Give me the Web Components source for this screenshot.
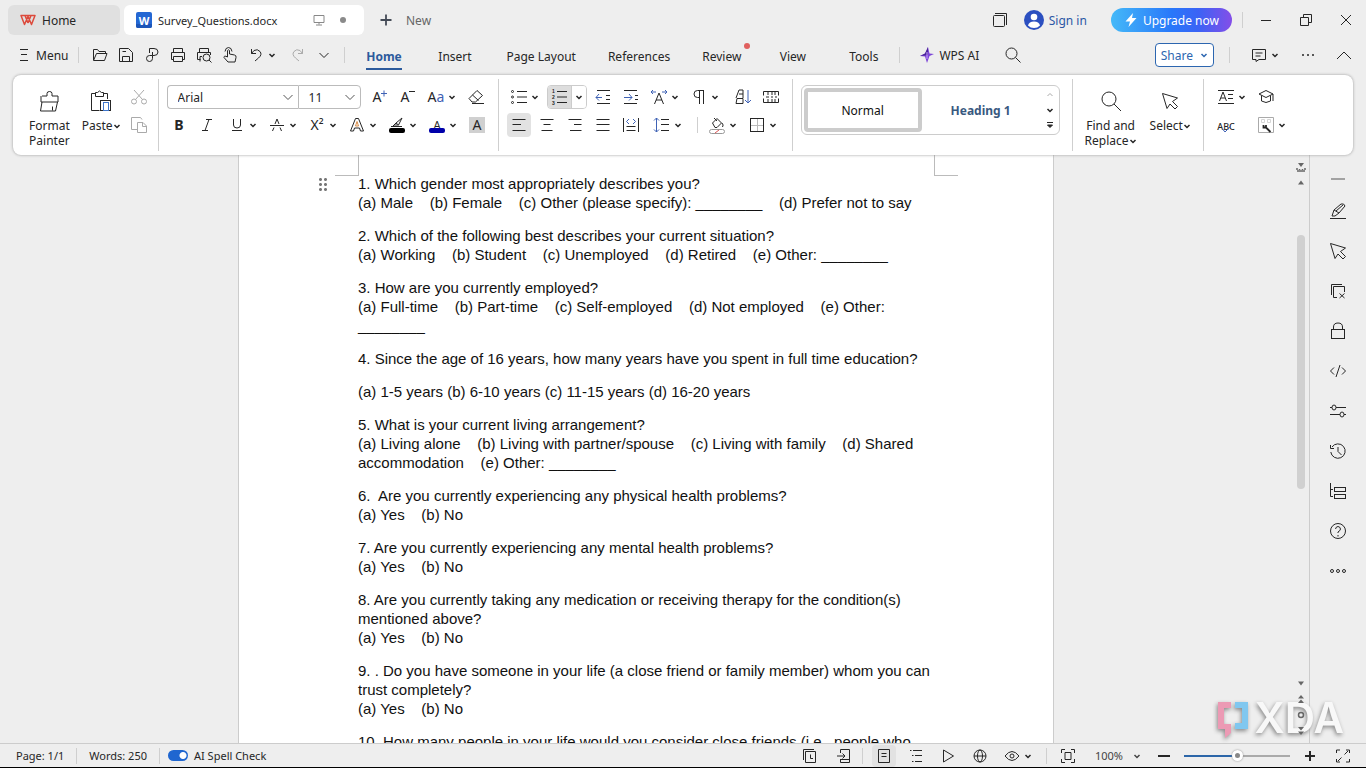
<!DOCTYPE html>
<html lang="en">
<head>
<meta charset="utf-8">
<meta name="viewport" content="width=device-width, initial-scale=1">
<title>Survey_Questions.docx</title>
<style>
  body {
    margin: 0;
    font-family: "Noto Sans", "Open Sans", sans-serif;
    font-size: 12px;
    color: #262626;
    background: #eee;
  }
</style>
</head>
<body>
<wps-app></wps-app>

<script>
// Icons, all drawn on a grid centred on 0,0
const caret = '<path d="M-2.5 -1L0 1.5L2.5 -1" stroke-width="1.5"/>';
const T = (text, attrs = "") =>
  `<text text-anchor="middle" fill="currentColor" stroke="none" font-size="14" y="5" ${attrs}>${text}</text>`;

const ICONS = {
  caret,
  chevron: '<path d="M-4.5 -2L0 2.5L4.5 -2"/>',
  up: '<path d="M-7 4L0 -3L7 4"/>',
  logo: '<path d="M-7 -4.5H7L3.500 4.500L0 -3.500L-3.500 4.500ZM-3 -4.500L0 3M3 -4.500L0 3" stroke="#dc4a3c" stroke-width="1.5" stroke-linejoin="round"/>',
  word: '<rect x="-8" y="-8" width="16" height="16" rx="2" fill="#2467d3" stroke="none"/><path d="M-8 4H8V6Q8 8 6 8H-6Q-8 8 -8 6Z" fill="#1c55b8" stroke="none"/>' + T("W", 'style="fill:#fff;font-weight:700;font-size:11px" y="3"'),
  monitor: '<path d="M-5 -4.5H5V2.5H-5ZM0 2.5V4.5M-3 5H3" stroke="#888"/>',
  dot: '<circle r="3" fill="#8a8a8a" stroke="none"/>',
  plus: '<path d="M-5.5 0H5.5M0 -5.5V5.5" stroke="#444b57" stroke-width="1.8"/>',
  windows: '<rect x="-6.500" y="-4.500" width="11" height="11" rx="1"/><path d="M-5 -6.5H6.5V5"/>',
  user: '<circle r="10" fill="#2b4fc0" stroke="none"/><circle cy="-3" r="3.3" fill="#fff" stroke="none"/><path d="M-6 5.5Q-5 1.5 0 1.5T6 5.5Q3.500 8 0 8T-6 5.500Z" fill="#fff" stroke="none"/>',
  bolt: '<path d="M2 -7L-5.500 1.500H-1L-2.500 7L5.500 -2H1Z" fill="#fff" stroke="none"/>',
  minimize: '<path d="M-5 .5H5"/>',
  restore: '<path d="M-5.500 -2.500H2.500V5.500H-5.500ZM-2.500 -2.500V-5.500H5.500V2.500H2.500"/>',
  close: '<path d="M-5 -5L5 5M5 -5L-5 5"/>',
  menu: '<path d="M-4 -5.500H4M-3 -.5H3M-4 5.500H4"/>',
  open: '<path d="M-6.500 5V-5.500H-2.500L-1 -3.500H5.500V-1.500M-6.500 5.500L-3.500 -1.500H7L4.500 5.500Z"/>',
  save: '<path d="M-6.500 -6.500H2.500L6.500 -2.500V6.500H-6.500ZM-3.500 6V1.500H3.500V6M-3.500 -3.500H0"/>',
  pdf: '<path d="M-2.500 -2V-6.500H2Q6 -6.500 6 -3T2 .5H.5V3.500Q.5 6.500 -2.500 6.500T-5.500 3.500T-2.500 .5H.5V-3"/>',
  print: '<path d="M-4.500 -2.500V-6.500H4.500V-2.500M-4.500 4.500H-6.500V-2.500H6.500V4.500H4.500M-4.500 1.500H4.500V6.500H-4.500Z"/>',
  preview: '<path d="M-4.500 -2.500V-6.500H4.500V-2.500M-3.500 4.500H-6.500V-2.500H6.500V0M-4 6.500V1.500H-2"/><circle cx="2.500" cy="2.500" r="3.500"/><path d="M5 5L7.500 7.500"/>',
  touch: '<path d="M-2.500 2V-4.500Q-1.500 -6 -.5 -4.500V-1L4.500 0Q6.500 .5 6 2.500L5 7H-2L-6 2.500Q-6 0 -2.500 2M-5 -3.500Q-4.500 -7.500 -1.500 -7.500T2 -3.500"/>',
  undo: '<path d="M-4.500 -6V-1.500H0M-4.500 -1.500L-2 -4.500Q1.500 -6.500 4 -3.500T2.500 3L-1 6"/>',
  redo: '<path d="M4.500 -6V-1.500H0M4.500 -1.500L2 -4.500Q-1.500 -6.500 -4 -3.500T-2.500 3L1 6" stroke="#aaa"/>',
  star: '<path d="M1 -8L2.500 -1.500L7 -1L2.500 1L0 8L-2 1.500L-7 1L-2 -1.500Z" fill="#7d45d8" stroke="none"/><path d="M-7 1L-2 -1.500L1 -8L1 0Z" fill="#4a2597" stroke="none"/><path d="M0 -3V4" stroke="#c9a3ff"/>',
  search: '<circle cx="-1.500" cy="-1.500" r="5.500"/><path d="M2.500 2.500L7.500 7.500"/>',
  comment: '<path d="M-6.500 -5.500H6.500V4.500H0L-3 6.500V4.500H-6.500ZM-3.500 -2H3.500M-3.500 1H1.500"/>',
  dots: '<path d="M-6 0H-4M-1 0H1M4 0H6" stroke-width="1.500"/>',
  painter: '<path d="M-7.500 -5.500H-2.500V-8Q-2.500 -10 0 -10T2.500 -8V-5.500H8.500V.5H-8.500V-5.500M-7.500 .5L-9 9.500H6L8 .5M3 5V9" transform="translate(.5 .5)"/>',
  paste: '<path d="M-1.500 9.500H-9.500V-7.500H-6M3 -7.500H6.500V-2M-5.500 -4.500V-8.500H-3.500Q-1.500 -11.500 .5 -8.500H2.500V-4.500Z"/><rect x="-.5" y="-.5" width="10" height="10"/><rect x="2.500" y="1.500" width="5" height="8" stroke="#3f75c9"/>',
  cut: '<g stroke="#aaa"><circle cx="-5" cy="4.500" r="2.500"/><circle cx="5" cy="4.500" r="2.500"/><path d="M-3.500 2.500L5 -7M3.500 2.500L-5 -7"/></g>',
  copy: '<path d="M-2 4.500H-7.500V-7.500H1.500L3 -5.500M-1.500 -2.500H4L7.500 1V7.500H-1.500ZM3.500 -2.500V1.500H7.500" stroke="#aaa"/>',
  grow: T("A", 'x="-2"') + '<path d="M2 -3.500H8M5 -6.500V-.5" stroke="#3f62b5"/>',
  shrink: T("A", 'x="-2"') + '<path d="M2 -5.500H8"/>',
  case: T('A<tspan fill="#3f62b5">a</tspan>'),
  eraser: '<path d="M-7 1.500L1 -6.500L6.500 -1.500L-.5 5H-4ZM-3.500 -2L2.500 3.500M-4 6.500H8"/>',
  bold: T("B", 'font-weight="700"'),
  italic: '<path d="M-1 -5.500H5M-5 5.500H1M2 -5.500L-2 5.500"/>',
  underline: '<path d="M-3.500 -6V0Q-3.500 3 0 3T3.500 0V-6M-5 5.500H5"/>',
  strike: '<path d="M-7 .5H7M-2 -1L0 -6L2 -1M-3 2.500L-4.500 6M3 2.500L4.500 6"/>',
  sup: T('X²'),
  outline: '<path d="M-6.500 6L-1.500 -6.500H1.500L6.500 6H3.500L2.500 3H-2.500L-3.500 6Z"/><path d="M-1.500 1L0 -3.500L1.500 1Z" stroke="#d88b45"/>',
  marker: '<path d="M-4 1L-1 -2L5 -7L1.500 0H-3M-1 -2L1.500 0M-6 1.500H5"/><rect x="-8" y="3" width="16" height="5" rx="2" fill="#000" stroke="none"/>',
  color: T("A", 'y="1" style="font-size:12px"') + '<rect x="-8" y="3" width="16" height="5" rx="2" fill="#00a" stroke="none"/>',
  shade: '<rect x="-8" y="-8" width="16" height="16" fill="#d0d0d0" stroke="none"/>' + T("A"),
  bullets: '<path d="M-2 -5.500H8M-2 0H8M-2 5.500H8"/><circle cx="-6.500" cy="-5.500" r="1"/><circle cx="-6.500" r="1"/><circle cx="-6.500" cy="5.500" r="1"/>',
  numbers: '<path d="M-2 -5.500H8M-2 0H8M-2 5.500H8"/><g style="font:700 5px \'Liberation Sans\',sans-serif">' + ["1", "2", "3"].map((n, i) => `<text x="-7" y="${-4 + i * 6}" fill="currentColor" stroke="none">${n}</text>`).join("") + "</g>",
  outdent: '<path d="M-6 -6.500H7M3 -1.500H7M3 2.500H7M-6 6.500H7"/><path d="M-1 .5H-7M-4 -3L-7 .5L-4 3.500" stroke="#3f62b5"/>',
  indent: '<path d="M-7 -6.500H6M4 -1.500H7M4 2.500H7M-7 6.500H6"/><path d="M-7 .5H1M-2 -3L1 .5L-2 3.500" stroke="#3f62b5"/>',
  scale: '<path d="M-4.500 7L0 -4L4.500 7M-3 3H3"/><path d="M-8 -5H-3M-6 -7L-8 -5L-6 -3M8 -5H3M6 -7L8 -5L6 -3" stroke="#3f62b5"/>',
  pilcrow: '<path d="M5 -6.500H-1.500Q-5 -6.500 -5 -3T-1.500 .5H0M.5 -6.500V7M4.500 -6.500V7"/>',
  sort: '<path d="M-7 1L-4 -7H0V1M-7 6.500L-6 1.500H0V6.500ZM-4 -3H0"/><path d="M5 -7V6M2 3L5 6L8 3" stroke="#3f62b5"/>',
  tabs: '<path d="M-7.500 -1.500V-5.500H7.500V-1.500M-7.500 1.500V5.500H7.500V1.500M-3 -5V-2M1 -5V-2M4 -5V-2M-3 5V2M1 5V2M4 5V2M-5 0H-2M0 0H2M4 0H6"/>',
  left: '<path d="M-6.500 -5.500H6.500M-6.500 -.5H2M-6.500 5.500H6.500"/>',
  center: '<path d="M-6.500 -5.500H6.500M-3.500 -.5H3.500M-5.500 5.500H5.500"/>',
  right: '<path d="M-6.500 -5.500H6.500M-1 -.5H6.500M-5 5.500H6.500"/>',
  justify: '<path d="M-6.500 -5.500H6.500M-6.500 -.5H6.500M-6.500 5.500H6.500"/>',
  distribute: '<path d="M-7.500 -7V7M7.500 -7V7M-4.500 1.500H4.500M-4.500 5.500H4.500"/><path d="M-2 -6L-4.500 -3.500L-2 -1M2 -6L4.500 -3.500L2 -1" stroke="#3f62b5"/>',
  spacing: '<path d="M-1 -5.500H7M-1 -.5H7M-1 5.500H7"/><path d="M-5.500 -7V7M-8 -4.500L-5.500 -7L-3 -4.500M-8 4.500L-5.500 7L-3 4.500" stroke="#3f62b5"/>',
  fill: '<path d="M-4.500 -2L0 -6.500L4.500 -2L0 2.500H-2ZM-3 -7L0 -4M5 -2Q7 0 5.500 2"/><rect x="-7.500" y="4.500" width="15" height="4" rx="2" stroke="#999"/><path d="M-2 8L2 5" stroke="#d55"/>',
  border: '<path d="M.5 -6V6M-6 .5H6" stroke="#bbb"/><rect x="-6.500" y="-6.500" width="13" height="13"/>',
  tridown: '<path d="M-3 -1.500H3L0 2.500Z" fill="currentColor" stroke="none"/>',
  triup: '<path d="M-3 1.500H3L0 -2.500Z" fill="currentColor" stroke="none"/>',
  caretup: '<path d="M-2.500 1L0 -1.500L2.500 1" stroke="#aaa"/>',
  more: '<path d="M-3 -2.500H3"/><path d="M-2.500 0L0 2.500L2.500 0Z" fill="currentColor"/>',
  find: '<circle cx="-2" cy="-2" r="7"/><path d="M3 3L10 10"/>',
  cursor: '<path d="M-7.500 -7.500L7.500 -3L2.500 .5L7.500 5.500L5 8L0 3L-3 7.500Z"/>',
  layout: '<path d="M-8 -6.500H8M-8 6.500H8M2 -2.500H7M2 1.500H7M-6.500 4L-3 -5L.5 4M-5 1H-1"/>',
  cap: '<path d="M-7 -3L0 -6.500L7 -3L0 .5ZM-4.500 -1.500V4Q0 7 4.500 4V-1.500M7 -3V4"/>',
  abc: T("ABC", 'y="1" style="font-size:9px;font-weight:500"') + '<path d="M-3.500 4L-1 7L5 1" stroke="#3f62b5"/>',
  wrench: '<path d="M-7.500 -7.500H7.500V7.500H-7.500Z" stroke="#aaa"/><path d="M-4.500 -5.500H-1.500V-2.500H-4.500ZM1.500 -5.500H4.500V-2.500H1.500Z" stroke="#d5d5d5"/><path d="M-2.500 0V2.500H0V0M0 2.500L4.500 7" stroke-width="1.800"/>',
  dash: '<path d="M-7 0H7" stroke="#888" stroke-width="1.500"/>',
  pen: '<path d="M-6 5L-4 -1L3 -7Q6 -8 7 -5L1 2L-3 5ZM-4 -1L1 2M-2 0L5 -6M-8 7.500H8"/>',
  layers: '<path d="M-6.500 4V-6.500H4M-1 6.500H-4.500V-4.500H6.500V1M1.500 2.500L6.500 7M6.500 2.500L1.500 7"/>',
  lock: '<rect x="-6.500" y="-1.500" width="13" height="9"/><path d="M-4.500 -1.500V-4Q-4.500 -8 0 -8T4.500 -4V-1.500"/>',
  code: '<path d="M-4 -3.500L-7.500 0L-4 3.500M4 -3.500L7.500 0L4 3.500M2 -6L-2 6"/>',
  sliders: '<path d="M-8 -3.500H-6M-2 -3.500H8M-8 3.500H2M6 3.500H8"/><ellipse cx="-4" cy="-3.500" rx="2" ry="2.500"/><ellipse cx="4" cy="3.500" rx="2" ry="2.500"/>',
  history: '<path d="M-6 -4A7.200 7.200 0 1 1 -7.200 1M-7.500 -6V-2.500H-4M0 -4V.5L3.500 4"/>',
  tree: '<path d="M-7.500 -8V5.500H-5M-7.500 -1.500H-5"/><rect x="-3.500" y="-3.500" width="11" height="4"/><rect x="-3.500" y="3.500" width="11" height="4"/>',
  help: '<circle r="7.500"/><path d="M-2.500 -2Q-2 -4.500 0 -4.500T2.500 -2Q2.500 -.5 0 1V2M0 4V5.500"/>',
  rings: '<circle cx="-6" r="1.500"/><circle r="1.500"/><circle cx="6" r="1.500"/>',
  recent: '<path d="M-4.500 -4.500H5.500V6.500H-4.500ZM-6.500 4V-6.500H4M.5 -1.500V2.500H3"/>',
  export: '<path d="M-3.500 -3V-6.500H5.500V6.500H-3.500V3M-7 0H1M-1.500 -2.500L1 0L-1.500 2.500M-3 3.500H5"/>',
  pageview: '<path d="M-5.500 -6.500H5.500V6.500H-5.500ZM-2.500 -2.500H2.500M-2.500 .5H2.500"/>',
  outlineview: '<path d="M-6 -5.500H-4.500M-3 -5.500H6M-4 -.5H-2.500M-1 -.5H6M-4 5.500H-2.500M-1 5.500H6"/>',
  play: '<path d="M-4.500 -6L5.500 0L-4.500 6Z"/>',
  globe: '<circle r="6"/><ellipse rx="2.500" ry="6"/><path d="M-6 0H6"/>',
  eye: '<path d="M-7 0Q0 -9 7 0Q0 9 -7 0Z"/><circle r="2"/>',
  fit: '<path d="M-6.500 -3V-6.500H-3M3 -6.500H6.500V-3M6.500 3V6.500H3M-3 6.500H-6.500V3M-3 -3.500H3V3.500H-3Z"/>',
  minus: '<path d="M-6 0H6" stroke-width="2"/>',
  add: '<path d="M-5 0H5M0 -5V5" stroke-width="2"/>',
  expand: '<path d="M-6.500 -3V-6H-3M3 -6H6.500V-3M6.500 3V6H3M-3 6H-6.500V3M1.500 -1.500L5 -5M-1.500 1.500L-5 5"/>',
  select: '<path d="M-3 -4H3L0 0Z" fill="currentColor" stroke="none"/><path d="M-4 1V3M-1.500 2V3M1.500 2V3M4 1V3M-4 4H4" stroke-width="1.500"/>',
  prev: '<path d="M-3 -.5H3L0 -4ZM-3 4H3L0 .5Z" fill="currentColor" stroke="none"/>',
  next: '<path d="M-3 -4H3L0 -.5ZM-3 .5H3L0 4Z" fill="currentColor" stroke="none"/>',
  ring: '<circle r="2.500" stroke-width="1.500"/>',
};

class UiIcon extends HTMLElement {
  connectedCallback() {
    const size = this.getAttribute("size") || 18;
    this.attachShadow({ mode: "open" });
    this.shadowRoot.innerHTML = `
      <style>
        :host { display: inline-flex; flex: none; }
        svg { display: block; overflow: visible; font-family: "Noto Sans", sans-serif; }
      </style>
      <svg width="${size}" height="${size}" viewBox="${-size / 2} ${-size / 2} ${size} ${size}"
        fill="none" stroke="currentColor" aria-hidden="true">${ICONS[this.getAttribute("name")]}</svg>`;
  }
}

// Small square button, with an optional drop-down caret
class ToolButton extends HTMLElement {
  connectedCallback() {
    const menu = this.hasAttribute("menu");
    this.attachShadow({ mode: "open" });
    this.shadowRoot.innerHTML = `
      <style>
        :host { display: inline-flex; flex: none; width: var(--tool, 24px); height: 24px; }
        :host([menu]) { width: 40px; }
        button {
          flex: 1; min-width: 0; display: flex; align-items: center; justify-content: center;
          border: 0; padding: 0; background: none; color: inherit; font: inherit; border-radius: 4px;
        }
        button.menu { justify-content: flex-start; }
        .icon { display: flex; flex: none; width: 24px; justify-content: center; }
        .caret { display: flex; flex: none; align-items: center; justify-content: center; }
        :host([active]) button { background: #e2e2e2; }
        :host([split]) { width: 40px; box-sizing: border-box; border: 1px solid #ccc; border-radius: 4px; }
        :host([split]) button { background: #ddd; border-radius: 3px; overflow: hidden; }
        :host([split]) .icon { width: 23px; }
        :host([split]) .caret { background: #fff; width: 14px; align-self: stretch; border-left: 1px solid #ccc; }
      </style>
      <button class="${menu ? "menu" : ""}" aria-label="${this.getAttribute("label") || this.getAttribute("icon")}">
        <span class="icon"><ui-icon name="${this.getAttribute("icon")}"></ui-icon></span>
        ${menu ? '<span class="caret"><ui-icon name="caret" size="8"></ui-icon></span>' : ""}
      </button>`;
  }
}

// Large ribbon button: icon above a label
class BigButton extends HTMLElement {
  connectedCallback() {
    this.attachShadow({ mode: "open" });
    this.shadowRoot.innerHTML = `
      <style>
        :host { display: block; }
        button {
          display: flex; flex-direction: column; align-items: center; gap: 5px;
          border: 0; padding: 0; background: none; color: inherit; font: inherit; line-height: 15px;
          white-space: nowrap;
        }
      </style>
      <button><ui-icon name="${this.getAttribute("icon")}" size="24"></ui-icon><span><slot></slot></span></button>`;
  }
}

class VRule extends HTMLElement {
  connectedCallback() {
    this.attachShadow({ mode: "open" });
    this.shadowRoot.innerHTML = `
      <style>:host { display: block; flex: none; width: 1px; height: 16px; background: #cfcfcf; }</style>`;
  }
}

class TitleBar extends HTMLElement {
  connectedCallback() {
    this.attachShadow({ mode: "open" });
    this.shadowRoot.innerHTML = `
      <style>
        :host { display: flex; align-items: center; height: 40px; padding-left: 8px; }
        button { border: 0; background: none; font: inherit; color: inherit; display: flex; align-items: center; padding: 0; }
        .tab { height: 30px; border-radius: 6px; background: #e0e0e0; padding: 0 12px; gap: 6px; box-sizing: border-box; }
        .home { width: 112px; }
        .doc { width: 240px; margin-left: 4px; background: #fff; }
        .doc span { flex: 1; text-align: left; font-size: 11px; }
        .new { gap: 11px; margin-left: 13px; color: #666; }
        .spacer { flex: 1; }
        .signin { gap: 5px; margin: 0 24px 0 12px; color: #2b57a5; text-decoration: none; display: flex; align-items: center; }
        .upgrade {
          height: 24px; border-radius: 12px; padding: 0 13px 0 11px; gap: 3px; color: #fff;
          background: linear-gradient(90deg, #45b9f8, #2878fa 50%, #3b63f5 72%, #844ee8);
        }
        v-rule { margin: 0 3px 0 10px; }
        .win { --tool: 40px; }
      </style>
      <button class="tab home"><ui-icon name="logo" size="16"></ui-icon>Home</button>
      <button class="tab doc"><ui-icon name="word" size="16"></ui-icon><span>Survey_Questions.docx</span>
        <ui-icon name="monitor"></ui-icon><ui-icon name="dot"></ui-icon></button>
      <button class="new"><ui-icon name="plus"></ui-icon>New</button>
      <div class="spacer"></div>
      <tool-button icon="windows" label="Windows"></tool-button>
      <a class="signin" href="#"><ui-icon name="user" size="20"></ui-icon>Sign in</a>
      <button class="upgrade"><ui-icon name="bolt"></ui-icon>Upgrade now</button>
      <v-rule></v-rule>
      <tool-button class="win" icon="minimize"></tool-button>
      <tool-button class="win" icon="restore"></tool-button>
      <tool-button class="win" icon="close"></tool-button>`;
  }
}

class MenuTab extends HTMLElement {
  connectedCallback() {
    this.attachShadow({ mode: "open" });
    this.shadowRoot.innerHTML = `
      <style>
        :host { display: flex; flex: none; min-width: 71px; justify-content: center; box-sizing: border-box; padding: 0 16px; }
        button { position: relative; border: 0; background: none; padding: 0; font: inherit; color: inherit; height: 24px; }
        :host([selected]) button { color: #2c5a9c; font-weight: 700; box-shadow: 0 2px #2c5a9c; }
        :host([badge]) button::after {
          content: ""; position: absolute; top: -1px; right: -9px;
          width: 6px; height: 6px; border-radius: 50%; background: #e0605e;
        }
      </style>
      <button><slot></slot></button>`;
  }
}

class MenuBar extends HTMLElement {
  connectedCallback() {
    this.attachShadow({ mode: "open" });
    this.shadowRoot.innerHTML = `
      <style>
        :host { display: flex; align-items: center; height: 30px; padding: 0 4px 5px 15px; }
        button { border: 0; background: none; padding: 0; font: inherit; color: inherit; display: flex; align-items: center; }
        .menu { gap: 3px; margin-right: 10px; }
        .quick { display: flex; --tool: 26px; margin: 0 7px 0 8px; }
        .quick [menu] { margin: 0 1px; }
        .tabs { display: flex; margin: 2px 0 0 3px; }
        .ai { gap: 3px; margin: 0 22px 0 18px; }
        .spacer { flex: 1; }
        .share {
          height: 24px; border: 1px solid #2c66b0; border-radius: 4px; background: #fff;
          color: #2c66b0; padding: 0 5px; gap: 7px; margin-right: 15px;
        }
        .end { display: flex; --tool: 36px; margin-left: 17px; }
        .end [menu] { margin-right: 3px; }
      </style>
      <button class="menu"><ui-icon name="menu"></ui-icon>Menu</button>
      <v-rule></v-rule>
      <div class="quick">
        <tool-button icon="open"></tool-button>
        <tool-button icon="save"></tool-button>
        <tool-button icon="pdf"></tool-button>
        <tool-button icon="print"></tool-button>
        <tool-button icon="preview"></tool-button>
        <tool-button icon="touch"></tool-button>
        <tool-button icon="undo" menu></tool-button>
        <tool-button icon="redo"></tool-button>
        <tool-button icon="chevron" label="Customize"></tool-button>
      </div>
      <v-rule></v-rule>
      <div class="tabs">
        <menu-tab selected>Home</menu-tab>
        <menu-tab>Insert</menu-tab>
        <menu-tab>Page Layout</menu-tab>
        <menu-tab>References</menu-tab>
        <menu-tab badge>Review</menu-tab>
        <menu-tab>View</menu-tab>
        <menu-tab>Tools</menu-tab>
      </div>
      <v-rule></v-rule>
      <button class="ai"><ui-icon name="star"></ui-icon>WPS AI</button>
      <tool-button icon="search"></tool-button>
      <div class="spacer"></div>
      <button class="share">Share<ui-icon name="caret" size="8"></ui-icon></button>
      <v-rule></v-rule>
      <div class="end">
        <tool-button icon="comment" menu></tool-button>
        <tool-button icon="dots" label="More"></tool-button>
        <tool-button icon="up" label="Collapse ribbon"></tool-button>
      </div>`;
  }
}

// Drop-down box of the ribbon: <select> with the chevron laid over its end
class ComboBox extends HTMLElement {
  connectedCallback() {
    this.attachShadow({ mode: "open" });
    this.shadowRoot.innerHTML = `
      <style>
        :host { display: grid; align-items: center; height: 24px; border: 1px solid #bbb; box-sizing: border-box; background: #fff; }
        select, ui-icon { grid-area: 1 / 1; }
        select { appearance: none; border: 0; background: none; height: 22px; font: inherit; color: inherit; padding: 0 10px; }
        ui-icon { justify-self: end; margin-right: 3px; pointer-events: none; color: #555; }
      </style>
      <select aria-label="${this.getAttribute("label")}"><option>${this.textContent}</option></select>
      <ui-icon name="chevron" size="14"></ui-icon>`;
  }
}

class RibbonBar extends HTMLElement {
  connectedCallback() {
    this.attachShadow({ mode: "open" });
    this.shadowRoot.innerHTML = `
      <style>
        :host {
          display: flex; position: relative; z-index: 1; height: 80px; margin: 0 13px; box-sizing: border-box;
          background: #fff; border-radius: 8px; box-shadow: 0 0 3px #999; padding: 0 16px;
        }
        v-rule { height: 72px; margin-top: 4px; }
        v-rule.short { height: 16px; margin: 4px 7px 0 7px; }
        .group { display: flex; padding-top: 10px; }
        .rows { display: flex; flex-direction: column; gap: 4px; }
        .row { display: flex; }
        .gap { display: flex; gap: 4px; }
        .big { padding-top: 14px; }
        .font { margin: 0 9px 0 8px; }
        .font combo-box:nth-of-type(1) { width: 131px; border-radius: 4px 0 0 4px; border-right: 0; }
        .font combo-box:nth-of-type(2) { width: 63px; border-radius: 0 4px 4px 0; }
        .size { margin: 0 5px 0 6px; }
        .style { margin-right: 6px; }
        .para { margin: 0 7px 0 8px; }
        .para .style { margin-right: 7px; }
        .styles {
          display: flex; box-sizing: border-box; width: 259px; height: 50px; margin: 0 12px 0 8px; padding: 2px;
          border: 1px solid #ccc; border-radius: 6px;
        }
        .styles button { width: 118px; border: 4px solid transparent; background: none; font: inherit; color: #111; padding: 0; border-radius: 4px; }
        .styles .normal { border-color: #ccc; }
        .styles .heading { color: #39597f; font-weight: 700; }
        .arrows { flex: 1; display: flex; flex-direction: column; align-items: flex-end; justify-content: space-around; padding-right: 1px; }
      </style>

      <div class="group big" style="gap: 12px">
        <big-button icon="painter">Format<br>Painter</big-button>
        <big-button icon="paste">Paste<ui-icon name="caret" size="8"></ui-icon></big-button>
      </div>
      <div class="group" style="margin: 0 7px 0 6px">
        <div class="rows"><tool-button icon="cut"></tool-button><tool-button icon="copy"></tool-button></div>
      </div>
      <v-rule></v-rule>

      <div class="group font"><div class="rows">
        <div class="row">
          <combo-box label="Font">Arial</combo-box>
          <combo-box label="Font size">11</combo-box>
          <div class="gap size"><tool-button icon="grow"></tool-button><tool-button icon="shrink"></tool-button></div>
          <tool-button icon="case" menu></tool-button>
          <tool-button icon="eraser"></tool-button>
        </div>
        <div class="row">
          <div class="gap style"><tool-button icon="bold"></tool-button><tool-button icon="italic"></tool-button></div>
          <tool-button icon="underline" menu></tool-button>
          <tool-button icon="strike" menu></tool-button>
          <tool-button icon="sup" menu label="Superscript"></tool-button>
          <tool-button icon="outline" menu></tool-button>
          <tool-button icon="marker" menu></tool-button>
          <tool-button icon="color" menu></tool-button>
          <tool-button icon="shade"></tool-button>
        </div>
      </div></div>
      <v-rule></v-rule>

      <div class="group para"><div class="rows">
        <div class="row gap">
          <div class="row"><tool-button icon="bullets" menu></tool-button><tool-button icon="numbers" menu split></tool-button></div>
          <tool-button icon="outdent"></tool-button>
          <tool-button icon="indent"></tool-button>
          <div class="row"><tool-button icon="scale" menu></tool-button><tool-button icon="pilcrow" menu></tool-button></div>
          <tool-button icon="sort"></tool-button>
          <tool-button icon="tabs"></tool-button>
        </div>
        <div class="row">
          <div class="gap style">
            <tool-button icon="left" active></tool-button>
            <tool-button icon="center"></tool-button>
            <tool-button icon="right"></tool-button>
            <tool-button icon="justify"></tool-button>
            <tool-button icon="distribute"></tool-button>
          </div>
          <tool-button icon="spacing" menu></tool-button>
          <v-rule class="short"></v-rule>
          <tool-button icon="fill" menu></tool-button>
          <tool-button icon="border" menu></tool-button>
        </div>
      </div></div>
      <v-rule></v-rule>

      <div class="group">
        <div class="styles">
          <button class="normal">Normal</button>
          <button class="heading">Heading 1</button>
          <div class="arrows">
            <ui-icon name="caretup" size="12"></ui-icon>
            <ui-icon name="caret" size="12"></ui-icon>
            <ui-icon name="more" size="12"></ui-icon>
          </div>
        </div>
      </div>
      <v-rule></v-rule>

      <div class="group big" style="gap: 13px; margin: 0 12px">
        <big-button icon="find">Find and<br>Replace<ui-icon name="caret" size="8"></ui-icon></big-button>
        <big-button icon="cursor">Select<ui-icon name="caret" size="8"></ui-icon></big-button>
      </div>
      <v-rule></v-rule>

      <div class="group" style="margin-left: 10px">
        <div class="rows"><tool-button icon="layout" menu></tool-button><tool-button icon="abc"></tool-button></div>
        <div class="rows"><tool-button icon="cap"></tool-button><tool-button icon="wrench" menu></tool-button></div>
      </div>`;
  }
}

const SURVEY = [
  "1. Which gender most appropriately describes you?\n(a) Male    (b) Female    (c) Other (please specify): ________    (d) Prefer not to say",
  "2. Which of the following best describes your current situation?\n(a) Working    (b) Student    (c) Unemployed    (d) Retired    (e) Other: ________",
  "3. How are you currently employed?\n(a) Full-time    (b) Part-time    (c) Self-employed    (d) Not employed    (e) Other: ________",
  "4. Since the age of 16 years, how many years have you spent in full time education?",
  "(a) 1-5 years (b) 6-10 years (c) 11-15 years (d) 16-20 years",
  "5. What is your current living arrangement?\n(a) Living alone    (b) Living with partner/spouse    (c) Living with family    (d) Shared accommodation    (e) Other: ________",
  "6.  Are you currently experiencing any physical health problems?\n(a) Yes    (b) No",
  "7. Are you currently experiencing any mental health problems?\n(a) Yes    (b) No",
  "8. Are you currently taking any medication or receiving therapy for the condition(s) mentioned above?\n(a) Yes    (b) No",
  "9. . Do you have someone in your life (a close friend or family member) whom you can trust completely?\n(a) Yes    (b) No",
  "10. How many people in your life would you consider close friends (i.e., people who",
];

class DocumentPage extends HTMLElement {
  connectedCallback() {
    this.attachShadow({ mode: "open" });
    this.shadowRoot.innerHTML = `
      <style>
        :host {
          display: block; position: relative; box-sizing: border-box; width: 816px; padding: 19px 119px 0;
          background: #fff; border: solid #ccc; border-width: 0 1px;
          font: 15px/19px "Liberation Sans", Arial, sans-serif; color: #111;
        }
        p { margin: 0 0 14px; white-space: pre-wrap; }
        .corner { position: absolute; top: 0; width: 23px; height: 20px; border-bottom: 1px solid #bbb; }
        .corner.l { left: 96px; border-right: 1px solid #bbb; }
        .corner.r { right: 95px; border-left: 1px solid #bbb; }
        .grip {
          position: absolute; left: 79px; top: 22px; width: 10px; height: 15px;
          background: radial-gradient(circle, #777 1px, transparent 2px) 0 0 / 5px 5px;
        }
      </style>
      <span class="corner l"></span><span class="corner r"></span><span class="grip"></span>
      ${SURVEY.map((text) => `<p>${text}</p>`).join("")}`;
  }
}

class ScrollStrip extends HTMLElement {
  connectedCallback() {
    this.attachShadow({ mode: "open" });
    this.shadowRoot.innerHTML = `
      <style>
        :host {
          display: flex; flex-direction: column; align-items: center; flex: none; width: 17px; padding: 4px 0;
          box-sizing: border-box; color: #666; position: relative; z-index: 3;
        }
        .track { flex: 1; display: grid; grid-template-rows: 9fr 52fr 38fr; width: 8px; }
        .thumb { grid-row: 2; border-radius: 4px; background: #d0d0d0; }
      </style>
      <ui-icon name="select" size="16"></ui-icon>
      <ui-icon name="triup" size="16"></ui-icon>
      <div class="track"><div class="thumb"></div></div>
      <ui-icon name="tridown" size="16"></ui-icon>
      <ui-icon name="prev" size="16"></ui-icon>
      <ui-icon name="ring" size="16"></ui-icon>
      <ui-icon name="next" size="16"></ui-icon>`;
  }
}

class SideRail extends HTMLElement {
  connectedCallback() {
    const tools = ["pen", "cursor", "layers", "lock", "code", "sliders", "history", "tree", "help", "rings"];
    this.attachShadow({ mode: "open" });
    this.shadowRoot.innerHTML = `
      <style>
        :host { display: flex; flex-direction: column; align-items: center; flex: none; width: 57px; box-sizing: border-box; border-left: 1px solid #ccc; padding-top: 12px; }
        .tool { height: 40px; display: flex; align-items: center; }
      </style>
      <tool-button icon="dash" label="Collapse"></tool-button>
      ${tools.map((name) => `<div class="tool"><tool-button icon="${name}"></tool-button></div>`).join("")}`;
  }
}

class BrandMark extends HTMLElement {
  connectedCallback() {
    this.attachShadow({ mode: "open" });
    this.shadowRoot.innerHTML = `
      <style>
        :host {
          position: absolute; right: 22px; bottom: 0; z-index: 2; display: flex; align-items: center; gap: 5px;
          color: #f8f8f8; font: 600 42px/42px Inter, sans-serif; filter: drop-shadow(-1px 2px 2px #888);
          pointer-events: none;
        }
        span { margin-bottom: 4px; }
      </style>
      <svg width="33" height="38" viewBox="0 0 33 38">
        <path d="M14 1H1V28H8V37L14 32V23H7V7H14Z" fill="#ec9ab4"/>
        <path d="M18 1H31V28H18V22H25V7H18Z" fill="#80c7ef"/>
      </svg>
      <span>XDA</span>`;
  }
}

class StatusBar extends HTMLElement {
  connectedCallback() {
    this.attachShadow({ mode: "open" });
    this.shadowRoot.innerHTML = `
      <style>
        :host {
          display: flex; align-items: center; flex: none; height: 25px; box-sizing: border-box; padding: 0 11px 0 16px;
          border-top: 1px solid #ccc; border-bottom: 1px solid #000; font-size: 11px;
        }
        v-rule { margin: 0 12px; }
        label { display: flex; align-items: center; gap: 6px; margin-left: -4px; }
        .switch {
          appearance: none; width: 20px; height: 11px; margin: 0; border-radius: 6px;
          background: radial-gradient(circle at 15px 50%, #fff 3px, #1f66d0 4px);
        }
        .spacer { flex: 1; }
        .views { display: flex; gap: 8px; }
        .views tool-button { height: 22px; }
        .files { display: flex; gap: 10px; }
        .files + v-rule { margin: 0 9px 0 6px; }
        .views + v-rule { margin: 0 9px 0 6px; }
        .zoom { border: 0; background: none; font: inherit; color: #444; padding: 0; display: flex; align-items: center; gap: 10px; margin: 0 11px 0 15px; }
        input[type="range"] { appearance: none; width: 106px; height: 12px; margin: 0 8px; background: linear-gradient(90deg, #2c66a8 50%, #aaa 50%) center / 100% 2px no-repeat; }
        input[type="range"]::-webkit-slider-thumb {
          appearance: none; width: 11px; height: 11px; border-radius: 50%; background: #888; border: 3px solid #fff; box-shadow: 0 0 2px #888;
        }
        .expand { margin-left: 9px; }
      </style>
      <span>Page: 1/1</span><v-rule></v-rule>
      <span>Words: 250</span><v-rule></v-rule>
      <label><input class="switch" type="checkbox" checked>AI Spell Check</label>
      <div class="spacer"></div>
      <div class="files"><tool-button icon="recent"></tool-button><tool-button icon="export"></tool-button></div>
      <v-rule></v-rule>
      <div class="views">
        <tool-button icon="pageview" active></tool-button>
        <tool-button icon="outlineview"></tool-button>
        <tool-button icon="play"></tool-button>
        <tool-button icon="globe"></tool-button>
        <tool-button icon="eye" menu></tool-button>
      </div>
      <v-rule></v-rule>
      <tool-button icon="fit"></tool-button>
      <button class="zoom">100%<ui-icon name="caret" size="8"></ui-icon></button>
      <tool-button icon="minus" label="Zoom out"></tool-button>
      <input type="range" aria-label="Zoom" min="0" max="200" value="100">
      <tool-button icon="add" label="Zoom in"></tool-button>
      <tool-button class="expand" icon="expand"></tool-button>`;
  }
}

class WpsApp extends HTMLElement {
  connectedCallback() {
    this.attachShadow({ mode: "open" });
    this.shadowRoot.innerHTML = `
      <style>
        :host { display: flex; flex-direction: column; height: 100vh; overflow: hidden; position: relative; }
        title-bar, menu-bar, ribbon-bar { flex: none; }
        main { flex: 1; display: flex; min-height: 0; position: relative; }
        .canvas { flex: 1; display: flex; justify-content: center; overflow: hidden; }
      </style>
      <title-bar></title-bar>
      <menu-bar></menu-bar>
      <ribbon-bar></ribbon-bar>
      <main>
        <div class="canvas"><document-page></document-page></div>
        <scroll-strip></scroll-strip>
        <side-rail></side-rail>
        <brand-mark></brand-mark>
      </main>
      <status-bar></status-bar>`;
  }
}

customElements.define("ui-icon", UiIcon);
customElements.define("tool-button", ToolButton);
customElements.define("big-button", BigButton);
customElements.define("v-rule", VRule);
customElements.define("menu-tab", MenuTab);
customElements.define("combo-box", ComboBox);
customElements.define("title-bar", TitleBar);
customElements.define("menu-bar", MenuBar);
customElements.define("ribbon-bar", RibbonBar);
customElements.define("document-page", DocumentPage);
customElements.define("scroll-strip", ScrollStrip);
customElements.define("side-rail", SideRail);
customElements.define("brand-mark", BrandMark);
customElements.define("status-bar", StatusBar);
customElements.define("wps-app", WpsApp);
</script>
</body>
</html>
